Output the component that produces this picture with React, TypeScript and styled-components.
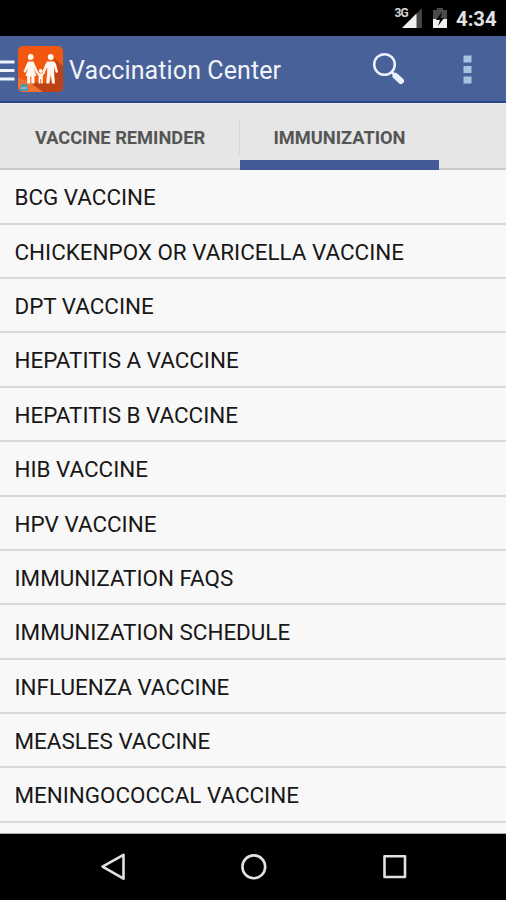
import React from 'react';
import styled, { createGlobalStyle } from 'styled-components';

const GlobalStyle = createGlobalStyle`
  * { box-sizing: border-box; }
  body { margin: 0; background: #000; }
`;

const Screen = styled.div`
  width: 506px;
  height: 900px;
  display: flex;
  flex-direction: column;
  overflow: hidden;
  background: #f8f8f8;
  font-family: Roboto, 'Liberation Sans', sans-serif;
`;

const StatusBar = styled.div`
  height: 36px;
  flex: none;
  background: #000;
  display: flex;
  justify-content: flex-end;
  padding-right: 11px;
`;

const Clock = styled.span`
  color: #e2e2e2;
  font-size: 20.3px;
  font-weight: 700;
  line-height: 38px;
  width: 39px;
  margin-left: 8px;
  white-space: nowrap;
`;

const AppBar = styled.header`
  height: 67px;
  flex: none;
  background: #486199;
  border-bottom: 2px solid #284584;
  display: flex;
  align-items: center;
`;

const Title = styled.h1`
  margin: 0 0 0 5px;
  flex: 1;
  padding-top: 5px;
  color: #f1f3f9;
  font-size: 25px;
  font-weight: 400;
  line-height: 30px;
  letter-spacing: 0.1px;
  white-space: nowrap;
`;

const Tabs = styled.nav`
  height: 67px;
  flex: none;
  display: flex;
  background: #e6e6e6;
  border-top: 1px solid #f0f0f0;
  box-shadow: inset 0 -2px #cbcbcb;
`;

const Tab = styled.div<{ $width: number; $active?: boolean }>`
  width: ${p => p.$width}px;
  text-align: center;
  color: #555;
  font-size: 18.25px;
  font-weight: 700;
  line-height: 67px;
  white-space: nowrap;
  border-bottom: ${p => (p.$active ? '10px solid #425b98' : '0')};
`;

const TabDivider = styled.div`
  width: 1px;
  height: 34px;
  margin: 16px 0 0 -1px;
  background: #d3d3d3;
`;

const List = styled.ul`
  list-style: none;
  margin: 0;
  padding: 0.4px 0 0;
  flex: 1;
  overflow: hidden;
  border-bottom: 1px solid #aaa;
`;

const Row = styled.li`
  height: 54.36px;
  padding: 1px 0 0 14.5px;
  box-shadow: inset 0 -2px #d9d9d9;
  color: #171717;
  font-size: 22.42px;
  line-height: 53.4px;
  white-space: nowrap;
`;

const NavBar = styled.footer`
  height: 66px;
  flex: none;
  background: #000;
`;

const Icon = styled.svg`
  display: block;
  flex: none;
`;

const vaccines = [
  'BCG VACCINE',
  'CHICKENPOX OR VARICELLA VACCINE',
  'DPT VACCINE',
  'HEPATITIS A VACCINE',
  'HEPATITIS B VACCINE',
  'HIB VACCINE',
  'HPV VACCINE',
  'IMMUNIZATION FAQS',
  'IMMUNIZATION SCHEDULE',
  'INFLUENZA VACCINE',
  'MEASLES VACCINE',
  'MENINGOCOCCAL VACCINE',
];

const SignalLabel = styled.span`
  color: #d5d5d5;
  font-size: 12px;
  font-weight: 700;
  line-height: 13px;
  margin: 7px -7px 0 0;
  letter-spacing: -0.8px;
`;

const Spacer = styled.span`
  width: 10px;
`;

function SignalIcon() {
  return (
    <Icon width="22" height="36">
      <path d="M21 8V28H1Z" fill="#444" />
      <path d="M15.500 13.500V28H1Z" fill="#f0f0f0" />
    </Icon>
  );
}

function BatteryIcon() {
  return (
    <Icon width="15" height="36">
      <path d="M0 10H4V8H10V10H14V19H0Z" fill="#4a4a4a" />
      <path d="M0 19H14V28H0Z" fill="#f0f0f0" />
      <path d="M9 12L3 20H7L5 26L11 18H7.500Z" fill="#000" />
    </Icon>
  );
}

function MenuIcon() {
  return (
    <Icon width="18" height="67">
      <path d="M0 27H14.500M0 35.500H14.500M0 44H14.500" stroke="#f0f3fb" strokeWidth="3" />
    </Icon>
  );
}

function FamilyLogo() {
  return (
    <Icon width="46" height="46" viewBox="0 0 46 46">
      <defs>
        <clipPath id="tile"><rect width="45" height="46" rx="5" /></clipPath>
      </defs>
      <g clipPath="url(#tile)">
        <rect width="46" height="46" fill="#f2570f" />
        <path d="M36 12L46 21V46H24L11 36L31 37L38 25Z" fill="#bd4315" />
        <path d="M0 31L11 36L25 46H0Z" fill="#f0702f" />
        <g fill="#fff6ef">
          <circle cx="12.700" cy="11" r="2.900" />
          <path d="M10 15.500H15.500L17.500 20L20 25.500L18.300 27L15.500 22L18.500 30H16.500V37.500H13.300V30.500H12.300V37.500H9.200V30H7.500L10 22L7.300 27L5.500 25.500L8 19.500Z" />
          <circle cx="32.700" cy="11" r="2.900" />
          <path d="M29 15.500H36.300L38 18L40 26L38 27L36 21V26L37 37.500H34L32.700 28.500L31.300 37.500H28.200L29.200 26V21L26.500 27L24.500 25.500L27.500 18Z" />
          <circle cx="22.700" cy="25" r="1.900" />
          <path d="M19 25L21.500 27.500H24L26 25L27.200 26L24.800 30V37.500H23.100V33H22.300V37.500H20.600V30L18 26.500Z" />
        </g>
        <path d="M3 38H9V41H10V45H2V41H3Z" fill="#4b98ae" />
        <path d="M3 42H9" stroke="#b6d9df" />
      </g>
    </Icon>
  );
}

function SearchIcon() {
  return (
    <Icon width="78" height="67">
      <circle cx="12.500" cy="29.500" r="10.300" fill="none" stroke="#eaf0fc" strokeWidth="2.500" />
      <path d="M19.500 37L24 41" stroke="#eaf0fc" strokeWidth="3" />
      <path d="M23.500 41L29 46" stroke="#eaf0fc" strokeWidth="6" strokeLinecap="round" />
    </Icon>
  );
}

function OverflowIcon() {
  return (
    <Icon width="56" height="67">
      <path d="M13.500 20.500H21.500V27.500H13.500ZM13.500 31H21.500V38H13.500ZM13.500 41.500H21.500V48.500H13.500Z" fill="#a9c2df" />
    </Icon>
  );
}

function NavigationIcons() {
  return (
    <Icon width="506" height="66" fill="none" stroke="#e2e2e2" strokeWidth="2.600" strokeLinejoin="round">
      <path d="M102.500 32.700L123.500 20.800V44.700Z" />
      <circle cx="253.800" cy="32.800" r="11.400" />
      <rect x="384.500" y="22.300" width="20.500" height="20.700" />
    </Icon>
  );
}

export default function App() {
  return (
    <Screen>
      <GlobalStyle />
      <StatusBar>
        <SignalLabel>3G</SignalLabel>
        <SignalIcon />
        <Spacer />
        <BatteryIcon />
        <Clock>4:34</Clock>
      </StatusBar>
      <AppBar>
        <MenuIcon />
        <FamilyLogo />
        <Title>Vaccination Center</Title>
        <SearchIcon />
        <OverflowIcon />
      </AppBar>
      <Tabs>
        <Tab $width={240}>VACCINE REMINDER</Tab>
        <TabDivider />
        <Tab $width={199} $active>IMMUNIZATION</Tab>
      </Tabs>
      <List>
        {vaccines.map(name => <Row key={name}>{name}</Row>)}
      </List>
      <NavBar><NavigationIcons /></NavBar>
    </Screen>
  );
}
